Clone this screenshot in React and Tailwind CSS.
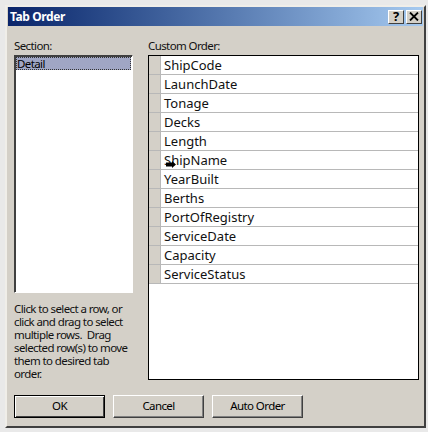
const fields = ['ShipCode', 'LaunchDate', 'Tonage', 'Decks', 'Length', 'ShipName', 'YearBuilt', 'Berths', 'PortOfRegistry', 'ServiceDate', 'Capacity', 'ServiceStatus']

function Btn({ label, isDefault }) {
  return (
    <button className={`w-[91px] h-[23px] bg-[#d4d0c8] text-[11.5px] tracking-[-0.6px] leading-none text-[#000] pb-px border ${isDefault ? 'border-black shadow-[inset_1px_1px_0_#fff,inset_-1px_-1px_0_#404040]' : 'border-t-white border-l-white border-r-[#404040] border-b-[#404040] shadow-[inset_-1px_-1px_0_#808080]'}`}>
      {label}
    </button>
  )
}

export default function App() {
  return (
    <div className="w-[428px] h-[432px] bg-[#e9e9e9] pt-[5px] pl-[5px] font-['Noto_Sans',sans-serif] text-black">
      <div className="w-[421px] h-[423px] bg-[#d4d0c8] border-t-2 border-l-2 border-t-[#f0eee9] border-l-[#f0eee9] border-r-2 border-b-2 border-r-[#404040] border-b-[#404040] flex flex-col px-px">
        <div className="h-[19px] shrink-0 bg-gradient-to-r from-[#0a246a] to-[#a6caf0] flex items-center justify-between pl-[2px] pr-[1px]">
          <span className="text-[12px] font-bold tracking-[-0.4px] text-white leading-none">Tab Order</span>
          <div className="flex gap-[2px]">
            <span className="w-[16px] h-[14px] bg-[#d4d0c8] border border-t-white border-l-white border-r-[#404040] border-b-[#404040] flex items-center justify-center text-[13px] font-bold leading-none">?</span>
            <span className="w-[16px] h-[14px] bg-[#d4d0c8] border border-t-white border-l-white border-r-[#404040] border-b-[#404040] flex items-center justify-center">
              <svg width="10" height="9" viewBox="0 0 10 9"><path d="M1 0.5L9 8.5M9 0.5L1 8.5" stroke="#000" strokeWidth="1.8" /></svg>
            </span>
          </div>
        </div>

        <div className="flex gap-[15px] pl-[6px] pt-[12px]">
          <div className="w-[119px] flex flex-col">
            <div className="text-[11.5px] tracking-[-0.6px] leading-[15px] pb-[2px] text-[#111]">Section:</div>
            <div className="h-[238px] bg-white border border-t-[#404040] border-l-[#404040] border-r-white border-b-white shadow-[inset_1px_1px_0_#404040] pl-[1px] pt-[1px] pr-[1px]">
              <div className="h-[13px] bg-[#a0a6c4] outline-1 outline-dotted outline-[#333] -outline-offset-1 text-[11.5px] tracking-[-0.6px] leading-[13px] pl-[1px]">Detail</div>
            </div>
            <p className="mt-[9px] w-[116px] text-[11.5px] tracking-[-0.6px] leading-[13px] text-[#111]">
              Click to select a row, or click and drag to select multiple rows.&nbsp; Drag selected row(s) to move them to desired tab order.
            </p>
          </div>

          <div className="flex flex-col">
            <div className="text-[11.5px] tracking-[-0.6px] leading-[15px] pb-[2px] text-[#111]">Custom Order:</div>
            <div className="w-[271px] h-[325px] bg-white border border-black">
              {fields.map((name) => (
                <div key={name} className="relative h-[19px] flex border-b border-[#b8b8b8]">
                  <div className="w-[12px] bg-[#d4d0c8] border-r border-[#b8b8b8]"></div>
                  <div className="pl-[3px] text-[13px] leading-[18px] text-[#111]">{name}</div>
                  {name === 'ShipName' && (
                    <svg className="absolute left-[17px] top-[10px]" width="10" height="7" viewBox="0 0 10 7"><path d="M0 1.5H6V0L10 3.5L6 7V5.5H0Z" fill="#000" /></svg>
                  )}
                </div>
              ))}
            </div>
          </div>
        </div>

        <div className="flex gap-[8px] pl-[6px] pt-[15px]">
          <Btn label="OK" isDefault />
          <Btn label="Cancel" />
          <Btn label="Auto Order" />
        </div>
      </div>
    </div>
  )
}
